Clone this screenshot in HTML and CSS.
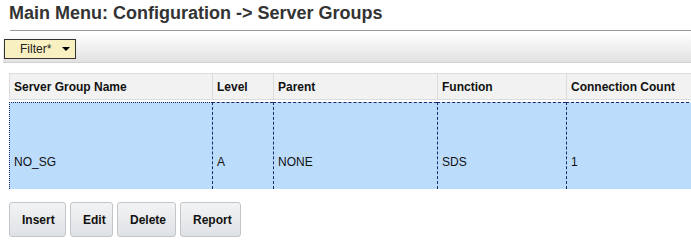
FILE: index.html
```html
<!DOCTYPE html>
<html>
<head>
<meta charset="utf-8">
<link rel="stylesheet" href="styles.css">
</head>
<body>
<div class="page">
  <h1 class="title">Main Menu: Configuration -&gt; Server Groups</h1>
  <div class="toolbar">
    <button class="filter">Filter* <span class="caret"></span></button>
  </div>
  <div class="table-wrap">
    <table class="grid">
      <colgroup>
        <col class="c1"><col class="c2"><col class="c3"><col class="c4"><col class="c5">
      </colgroup>
      <thead>
        <tr>
          <th>Server Group Name</th>
          <th>Level</th>
          <th>Parent</th>
          <th>Function</th>
          <th>Connection Count</th>
        </tr>
      </thead>
      <tbody>
        <tr class="selected">
          <td class="first">NO_SG</td>
          <td>A</td>
          <td>NONE</td>
          <td>SDS</td>
          <td>1</td>
        </tr>
      </tbody>
    </table>
  </div>
  <div class="actions">
    <button class="btn">Insert</button>
    <button class="btn">Edit</button>
    <button class="btn">Delete</button>
    <button class="btn">Report</button>
  </div>
</div>
</body>
</html>
```

FILE: styles.css
```css
html, body {
  margin: 0;
  padding: 0;
  background: #fff;
  font-family: "Liberation Sans", Arial, sans-serif;
  overflow: hidden;
}
.page {
  width: 691px;
}
.title {
  margin: 0 0 0 10px;
  padding: 3px 0 7px 0;
  font-size: 18px;
  line-height: 20px;
  font-weight: bold;
  color: #333;
  border-bottom: 1px solid #999;
  text-indent: -1px;
  white-space: nowrap;
}
.toolbar {
  margin: 1px 0 0 3px;
  height: 31px;
  box-sizing: border-box;
  padding: 7px 0 0 1px;
  background: linear-gradient(#ffffff, #e2e2e2);
  border-bottom: 1px solid #d0d0d0;
}
.filter {
  display: flex;
  align-items: center;
  width: 72px;
  height: 20px;
  box-sizing: border-box;
  margin: 0;
  padding: 0 0 0 15px;
  background: #f8f0c0;
  border: 1px solid #333;
  border-radius: 0;
  font-family: "Liberation Sans", Arial, sans-serif;
  font-size: 12px;
  color: #222;
}
.caret {
  display: inline-block;
  width: 0;
  height: 0;
  margin-left: 11px;
  border-left: 4px solid transparent;
  border-right: 4px solid transparent;
  border-top: 4px solid #000;
}
.table-wrap {
  margin: 10px 0 0 9px;
}
.grid {
  border-collapse: separate;
  border-spacing: 0;
  width: 690px;
  table-layout: fixed;
  font-size: 12px;
}
.c1 { width: 203px; }
.c2 { width: 61px; }
.c3 { width: 164px; }
.c4 { width: 129px; }
.c5 { width: 133px; }
.grid th {
  height: 27px;
  box-sizing: border-box;
  padding: 0 0 0 4px;
  text-align: left;
  font-size: 12px;
  font-weight: bold;
  color: #111;
  background: #f2f2f2;
  border-top: 1px solid #dcdcdc;
  border-bottom: 1px solid #dcdcdc;
  border-left: 1px solid #dcdcdc;
}
.grid td {
  height: 87px;
  box-sizing: border-box;
  padding: 31px 0 0 4px;
  color: #111;
  background: #bcdcfc;
  border-top: 1px dashed #1a2a70;
  border-left: 1px dashed #1a2a70;
  vertical-align: middle;
}
.grid td.first {
  border-left: 1px dotted #1a2a70;
  border-top: 1px dotted #1a2a70;
}
.grid tbody::before {
  content: "";
  display: table-row;
  height: 2px;
}
.actions {
  display: flex;
  gap: 4px;
  margin: 13px 0 0 9px;
}
.btn {
  height: 35px;
  box-sizing: border-box;
  margin: 0;
  padding: 0 12px;
  background: linear-gradient(#f2f3f4, #dfe2e5);
  border: 1px solid #c2c6ca;
  border-radius: 3px;
  font-family: "Liberation Sans", Arial, sans-serif;
  font-size: 12px;
  font-weight: bold;
  color: #111;
}
.btn:nth-child(1) { width: 57px; }
.btn:nth-child(2) { width: 43px; }
.btn:nth-child(3) { width: 59px; }
.btn:nth-child(4) { width: 61px; }
```
